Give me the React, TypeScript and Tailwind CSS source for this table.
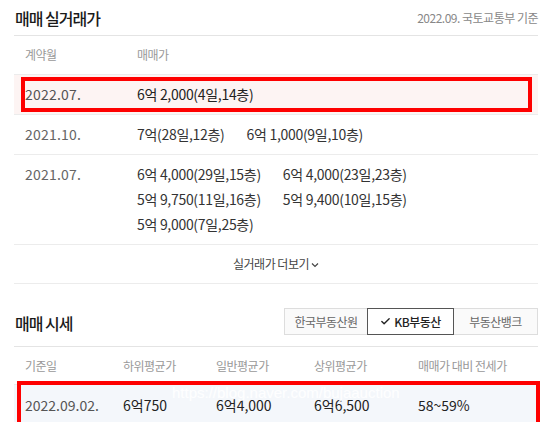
import { Check } from 'lucide-react'

const font = { fontFamily: '"Noto Sans CJK KR", "Noto Sans", sans-serif' }

type Deal = { month: string; prices: string[]; highlight?: boolean }

const deals: Deal[] = [
  { month: '2022.07.', prices: ['6억 2,000(4일,14층)'], highlight: true },
  { month: '2021.10.', prices: ['7억(28일,12층)', '6억 1,000(9일,10층)'] },
  {
    month: '2021.07.',
    prices: ['6억 4,000(29일,15층)', '6억 4,000(23일,23층)', '5억 9,750(11일,16층)', '5억 9,400(10일,15층)', '5억 9,000(7일,25층)'],
  },
]

const cols = 'grid grid-cols-[98px_93px_98px_104px_1fr]'

function RedBox({ className }: { className: string }) {
  return <div className={'pointer-events-none absolute border-[4px] border-[#fe0000] ' + className}></div>
}

export default function App() {
  return (
    <div className="w-[543px] h-[422px] overflow-hidden bg-white pl-[14px] pr-[5px]" style={font}>
      {/* 실거래가 */}
      <div className="flex items-center justify-between h-[36px] border-b border-[#e4e4e4]">
        <h2 className="text-[16px] font-medium text-[#1a1a1a] tracking-[-1px] leading-none pl-[1px]">매매 실거래가</h2>
        <span className="text-[12px] text-[#888] tracking-[-0.5px]">2022.09. 국토교통부 기준</span>
      </div>

      <div className="flex h-[39px] items-center border-b border-[#ececec] text-[12px] text-[#999] tracking-[-0.5px]">
        <span className="w-[123px] pl-[11px]">계약월</span>
        <span>매매가</span>
      </div>

      {deals.map((d) => (
        <div
          key={d.month}
          className={
            'relative flex py-[7px] leading-[25px] border-b border-[#ececec] text-[14px] ' +
            (d.highlight ? 'bg-[#fdf4f3]' : '')
          }
        >
          <span className={'w-[123px] shrink-0 pl-[11px] tracking-[0.2px] ' + (d.highlight ? 'text-[#555]' : 'text-[#666]')}>{d.month}</span>
          <div className={'flex flex-wrap max-w-[300px] gap-x-[22px] tracking-[-0.3px] ' + (d.highlight ? 'text-[#222]' : 'text-[#333]')}>
            {d.prices.map((p, i) => (
              <span key={i}>{p}</span>
            ))}
          </div>
          {d.highlight && <RedBox className="left-[7px] right-[6px] top-[2px] bottom-[2px]" />}
        </div>
      ))}

      <div className="flex h-[39px] items-center justify-center border-b border-[#ececec] text-[12px] text-[#444] tracking-[-0.5px]">
        실거래가 더보기
        <svg width="8" height="6" viewBox="0 0 8 6" className="ml-[2px] mt-[1px]">
          <path d="M1 1.5 L4 4.5 L7 1.5" fill="none" stroke="#444" strokeWidth="1.2" />
        </svg>
      </div>

      {/* 시세 */}
      <div className="flex items-center justify-between pt-[24px] pb-[11px] border-b border-[#e4e4e4]">
        <h2 className="text-[16px] font-medium text-[#1a1a1a] tracking-[-1px] leading-none pl-[1px] pt-[2px]">매매 시세</h2>
        <div className="flex h-[27px] text-[12px] tracking-[-0.5px]">
          <button className="w-[83px] border border-r-0 border-[#ddd] bg-[#fafafa] text-[#666]">한국부동산원</button>
          <button className="w-[87px] border border-[#555] bg-white text-[#222] font-medium flex items-center justify-center gap-[3px]">
            <Check size={11} strokeWidth={3} />
            KB부동산
          </button>
          <button className="w-[84px] border border-l-0 border-[#ddd] bg-[#fafafa] text-[#666]">부동산뱅크</button>
        </div>
      </div>

      <div className={cols + ' h-[38px] items-center border-b border-[#ececec] text-[12px] text-[#999] tracking-[-0.5px] pl-[11px]'}>
        <span>기준일</span>
        <span>하위평균가</span>
        <span>일반평균가</span>
        <span>상위평균가</span>
        <span>매매가 대비 전세가</span>
      </div>

      <div className={cols + ' relative h-[40px] items-center bg-[#f4f7fb] text-[14px] pl-[11px]'}>
        <span className="text-[#555]">2022.09.02.</span>
        <span className="text-[#222]">6억750</span>
        <span className="text-[#222]">6억4,000</span>
        <span className="text-[#222]">6억6,500</span>
        <span className="text-[#222]">58~59%</span>
        <span className="pointer-events-none absolute left-[158px] top-[0px] text-[15px] leading-none text-white/90" style={{ fontFamily: '"Liberation Sans", sans-serif' }}>
          https://blog.naver.com/bujaauction
        </span>
        <RedBox className="left-[3px] right-[-2px] top-[-4px] bottom-[-1px]" />
      </div>
    </div>
  )
}
